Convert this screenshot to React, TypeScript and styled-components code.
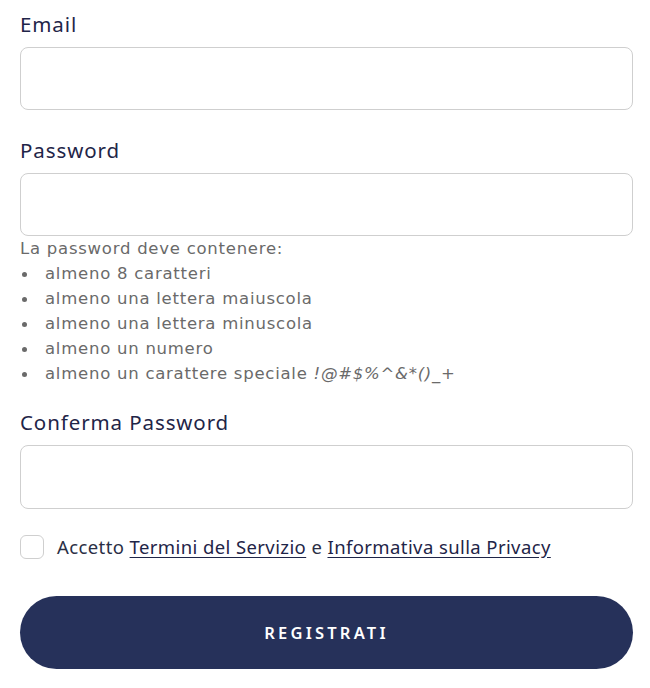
import React from "react";
import styled, { createGlobalStyle } from "styled-components";

const Global = createGlobalStyle`
  html, body { margin: 0; padding: 0; background: #ffffff; }
  * { box-sizing: border-box; }
`;

const Form = styled.form`
  display: flex;
  flex-direction: column;
  padding: 9px 17px 0 20px;
  font-family: "Noto Sans", "Open Sans", sans-serif;
`;

const Field = styled.div<{ $gap?: number }>`
  display: flex;
  flex-direction: column;
  margin-bottom: ${(p) => p.$gap ?? 25}px;
`;

const Label = styled.label`
  font-size: 20.5px;
  line-height: 30px;
  color: #1f2548;
  margin-bottom: 8px;
  letter-spacing: 0.9px;
`;

const Input = styled.input<{ $h?: number }>`
  height: ${(p) => p.$h ?? 63}px;
  width: 100%;
  border: 1.5px solid #cfcfcf;
  border-radius: 8px;
  background: #fff;
  font-size: 18px;
  padding: 0 16px;
  outline: none;
`;

const Hint = styled.div`
  font-family: "DejaVu Sans", "Open Sans", sans-serif;
  font-size: 16.5px;
  line-height: 25px;
  color: #6a6a6a;
  letter-spacing: 0.75px;
`;

const List = styled.ul`
  list-style: none;
  margin: 0;
  padding: 0;
`;

const Item = styled.li`
  position: relative;
  padding-left: 25px;
  &::before {
    content: "";
    position: absolute;
    left: 2px;
    top: 11px;
    width: 5px;
    height: 5px;
    border-radius: 50%;
    background: #6a6a6a;
  }
`;

const Special = styled.em`
  font-style: italic;
`;

const CheckRow = styled.label`
  display: flex;
  align-items: center;
  gap: 13px;
  margin-bottom: 37px;
  font-size: 18.5px;
  letter-spacing: 0.4px;
  color: #2b2f45;
`;

const Box = styled.input`
  appearance: none;
  margin: 0;
  width: 24px;
  height: 24px;
  border: 1.5px solid #cfcfcf;
  border-radius: 6px;
  background: #fff;
`;

const Link = styled.a`
  color: #1f2548;
  text-decoration: underline;
  text-underline-offset: 3px;
`;

const Button = styled.button`
  height: 73px;
  width: 100%;
  border: none;
  border-radius: 37px;
  background: #26315a;
  color: #ffffff;
  font-family: "Noto Sans", "Open Sans", sans-serif;
  font-weight: 600;
  font-size: 16.5px;
  letter-spacing: 3.2px;
  cursor: pointer;
`;

export default function App() {
  return (
    <>
      <Global />
      <Form onSubmit={(e) => e.preventDefault()}>
        <Field>
          <Label>Email</Label>
          <Input type="email" />
        </Field>
        <Field $gap={21}>
          <Label>Password</Label>
          <Input type="password" />
          <Hint>
            La password deve contenere:
            <List>
              <Item>almeno 8 caratteri</Item>
              <Item>almeno una lettera maiuscola</Item>
              <Item>almeno una lettera minuscola</Item>
              <Item>almeno un numero</Item>
              <Item>
                almeno un carattere speciale <Special>!@#$%^&amp;*()_+</Special>
              </Item>
            </List>
          </Hint>
        </Field>
        <Field>
          <Label>Conferma Password</Label>
          <Input type="password" $h={64} />
        </Field>
        <CheckRow>
          <Box type="checkbox" />
          <span>
            Accetto <Link href="#">Termini del Servizio</Link> e{" "}
            <Link href="#">Informativa sulla Privacy</Link>
          </span>
        </CheckRow>
        <Button type="submit">REGISTRATI</Button>
      </Form>
    </>
  );
}
